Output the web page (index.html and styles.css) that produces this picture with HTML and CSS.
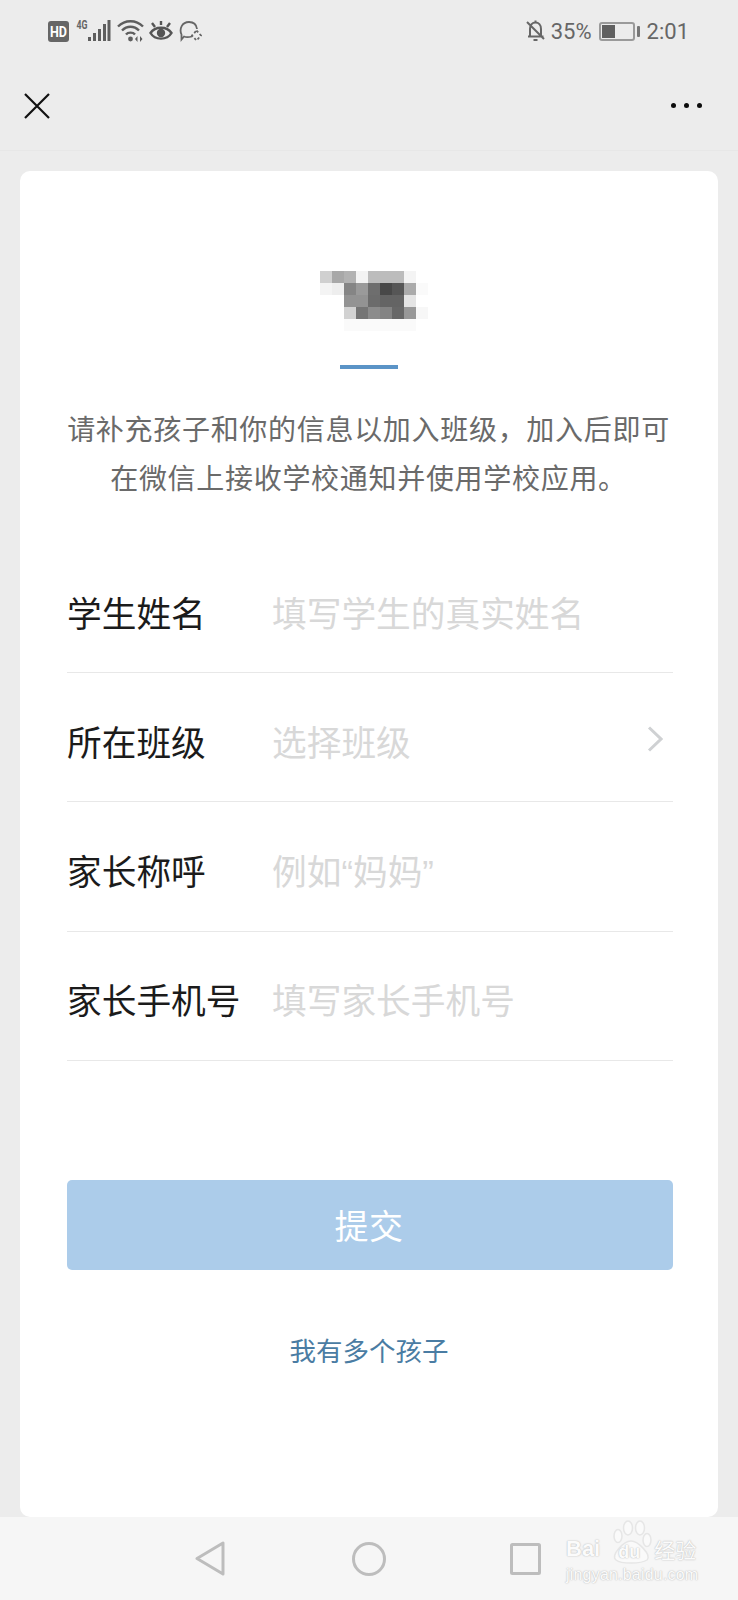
FILE: index.html
```html
<!DOCTYPE html>
<html lang="zh-CN">
<head>
<meta charset="utf-8">
<title>加入班级</title>
<link rel="stylesheet" href="styles.css">
</head>
<body>
<div class="page">
  <div class="status">
    <div class="status-left">
      <svg class="s-hd" width="21" height="21" viewBox="0 0 21 21"><rect width="21" height="21" rx="3" fill="#666"/><text x="10.5" y="15.500" text-anchor="middle" textLength="17" lengthAdjust="spacingAndGlyphs" class="hd-text">HD</text></svg>
      <svg class="s-sig" width="36" height="24" viewBox="0 0 36 24"><text x="1.500" y="10" textLength="11" lengthAdjust="spacingAndGlyphs" class="sig-text">4G</text><rect x="13" y="18" width="3" height="4" fill="#5e5e5e"/><rect x="18" y="14" width="3" height="8" fill="#5e5e5e"/><rect x="23" y="10" width="3" height="12" fill="#5e5e5e"/><rect x="28" y="5" width="3" height="17" fill="#5e5e5e"/><rect x="32.500" y="1" width="3" height="21" fill="#5e5e5e"/></svg>
      <svg class="s-wifi" width="27" height="24" viewBox="0 0 27 24" fill="none" stroke="#5e5e5e" stroke-width="2.400"><path d="M1 7.500C8 0.500 19 0.500 26 7.500"/><path d="M5 11.500C10 6.500 17 6.500 22 11.500"/><path d="M9 15.500C11 13 16 13 18 15.500"/><circle cx="13.500" cy="20" r="2.400" fill="#5e5e5e" stroke="none"/><path d="M20.500 17l-2.500 3 2.500 3zM23 17l2.500 3-2.500 3z" fill="#5e5e5e" stroke="none"/></svg>
      <svg class="s-eye" width="24" height="22" viewBox="0 0 24 22" fill="none" stroke="#555" stroke-width="2.400"><path d="M1.500 13C6 6 18 6 22.500 13C18 20.500 6 20.500 1.500 13Z"/><circle cx="12" cy="13" r="4.200" fill="#555" stroke="none"/><path d="M12 1v4M3 3l3 4M21 3l-3 4"/></svg>
      <svg class="s-chat" width="23" height="22" viewBox="0 0 23 22" fill="none" stroke="#666" stroke-width="1.800"><path d="M13 16.500C9 17.500 6 17 5 16.500L2.500 19.500V14.500C0 9 3 2 10 2C15 2 17.500 5 18 9"/><path d="M17.500 10.500L22 15.500L17.500 20.500L13 15.500Z" stroke-dasharray="2.500 2.200"/></svg>
    </div>
    <div class="status-right">
      <svg width="21" height="22" viewBox="0 0 21 22" fill="none" stroke="#666" stroke-width="2"><path d="M3 16.500h15.500M5 16V9c0-4 2.500-6.500 5.500-6.500S16 5 16 9v7M10.500 2V0.500M8.500 20h4M2 2l17 17"/></svg>
      <span class="pct">35%</span>
      <span class="battery"><span class="battery-fill"></span></span>
      <span class="battery-tip"></span>
      <span class="time">2:01</span>
    </div>
  </div>

  <div class="topbar">
    <svg width="28" height="28" viewBox="0 0 28 28" stroke="#111" stroke-width="2.200" fill="none"><path d="M2 2L26 26M26 2L2 26"/></svg>
    <div class="dots"><i></i><i></i><i></i></div>
  </div>

  <main class="card">
    <svg class="avatar" width="108" height="72" viewBox="0 0 108 72">
      <rect x="0" y="0" width="12" height="12" fill="#d0d0d0"/><rect x="12" y="0" width="12" height="12" fill="#a8a8a8"/><rect x="24" y="0" width="12" height="12" fill="#b2b2b2"/><rect x="36" y="0" width="12" height="12" fill="#f3f3f3"/><rect x="48" y="0" width="36" height="12" fill="#bcbcbc"/><rect x="84" y="0" width="12" height="12" fill="#f4f4f4"/>
      <rect x="0" y="12" width="12" height="12" fill="#f4f4f4"/><rect x="12" y="12" width="12" height="12" fill="#eeeeee"/><rect x="24" y="12" width="12" height="12" fill="#858585"/><rect x="36" y="12" width="12" height="12" fill="#9a9a9a"/><rect x="48" y="12" width="12" height="12" fill="#6e6e6e"/><rect x="60" y="12" width="12" height="12" fill="#484848"/><rect x="72" y="12" width="12" height="12" fill="#565656"/><rect x="84" y="12" width="12" height="12" fill="#ababab"/><rect x="96" y="12" width="12" height="12" fill="#fafafa"/>
      <rect x="24" y="24" width="24" height="12" fill="#939393"/><rect x="48" y="24" width="12" height="12" fill="#6c6c6c"/><rect x="60" y="24" width="24" height="12" fill="#646464"/><rect x="84" y="24" width="12" height="12" fill="#e4e4e4"/>
      <rect x="24" y="36" width="12" height="12" fill="#d2d2d2"/><rect x="36" y="36" width="12" height="12" fill="#757575"/><rect x="48" y="36" width="12" height="12" fill="#8c8c8c"/><rect x="60" y="36" width="12" height="12" fill="#838383"/><rect x="72" y="36" width="12" height="12" fill="#676767"/><rect x="84" y="36" width="12" height="12" fill="#989898"/><rect x="96" y="36" width="12" height="12" fill="#f7f7f7"/>
      <rect x="24" y="48" width="72" height="12" fill="#fafafa"/>
    </svg>
    <div class="rule"></div>
    <p class="intro">请补充孩子和你的信息以加入班级，加入后即可<br>在微信上接收学校通知并使用学校应用。</p>

    <form class="form">
      <div class="row"><span class="label">学生姓名</span><span class="ph">填写学生的真实姓名</span></div>
      <div class="row"><span class="label">所在班级</span><span class="ph">选择班级</span>
        <svg class="chev" width="16" height="26" viewBox="0 0 16 26" fill="none" stroke="#cfd1d3" stroke-width="3"><path d="M2 1.500L14 13L2 24.500"/></svg>
      </div>
      <div class="row"><span class="label">家长称呼</span><span class="ph">例如<span class="q">“</span>妈妈<span class="q">”</span></span></div>
      <div class="row"><span class="label">家长手机号</span><span class="ph">填写家长手机号</span></div>
    </form>

    <div class="submit">提交</div>
    <div class="more">我有多个孩子</div>
  </main>

  <nav class="nav">
    <svg class="nav-back" width="31" height="36" viewBox="0 0 31 36" fill="none" stroke="#bdbdbd" stroke-width="3" stroke-linejoin="round"><path d="M28 2V33L2 17.500Z"/></svg>
    <svg class="nav-home" width="34" height="34" viewBox="0 0 34 34" fill="none" stroke="#bdbdbd" stroke-width="3"><circle cx="17" cy="17" r="15.500"/></svg>
    <svg class="nav-recent" width="31" height="32" viewBox="0 0 31 32" fill="none" stroke="#bdbdbd" stroke-width="3" stroke-linejoin="round"><rect x="1.500" y="1.500" width="28" height="29" rx="1"/></svg>
    <div class="mark">
      <svg class="paw" width="44" height="46" viewBox="0 0 44 46" fill="#fafafa" stroke="#e6e6e6" stroke-width="1.500"><ellipse cx="9" cy="17" rx="4" ry="6.500"/><ellipse cx="19" cy="9" rx="4.500" ry="7"/><ellipse cx="31" cy="9" rx="4.500" ry="7"/><ellipse cx="38" cy="21" rx="4" ry="6.500"/><path d="M22 22C29 22 43 36 38 41C32 45 12 45 7 41C1 36 15 22 22 22Z"/></svg>
      <div class="mark-top"><span class="mark-bai">Bai</span><span class="mark-du">du</span><span class="mark-cn">经验</span></div>
      <div class="mark-url">jingyan.baidu.com</div>
    </div>
  </nav>
</div>
</body>
</html>
```
FILE: styles.css
```css
* { box-sizing: border-box; }
html, body { margin: 0; padding: 0; }
body { font-family: "Noto Sans CJK SC", "Noto Sans", sans-serif; background: #ececec; }
.page { width: 738px; height: 1600px; display: flex; flex-direction: column; overflow: hidden; background: #ececec; }

.status { height: 62px; flex: none; display: flex; justify-content: space-between; align-items: center; padding: 0 49px 0 48px; }
.status-left, .status-right { display: flex; align-items: center; }
.s-hd { margin-right: 6px; }
.s-sig { margin-right: 6px; }
.s-wifi { margin-right: 5px; }
.s-eye { margin-right: 6px; }
.hd-text { font: 700 14px "Roboto", sans-serif; fill: #fff; }
.sig-text { font: 700 12px "Roboto", sans-serif; fill: #666; }
.status-right { color: #666; font: 400 22px "Roboto", sans-serif; }
.pct { margin-left: 5px; margin-right: 7px; }
.battery { width: 36px; height: 19px; border: 2px solid #9a9a9a; border-radius: 3px; padding: 1px; display: block; }
.battery-fill { display: block; width: 13px; height: 100%; background: #606060; }
.battery-tip { width: 3px; height: 11px; margin-left: 2px; background: #777; border-radius: 1px; }
.time { margin-left: 7px; }

.topbar { height: 89px; flex: none; display: flex; justify-content: space-between; align-items: center; padding: 0 36px 1px 23px; border-bottom: 1px solid #e7e7e7; }
.dots { display: flex; gap: 8px; }
.dots i { width: 5px; height: 5px; border-radius: 50%; background: #0c0c0c; display: block; }

.card { margin: 20px 20px 0; width: 698px; height: 1346px; flex: none; background: #fff; border-radius: 10px; padding: 100px 45px 0 47px; display: flex; flex-direction: column; align-items: center; }
.avatar { flex: none; margin-left: 8px; }
.rule { width: 58px; height: 4px; margin: 22px 2px 0 0; background: #5b94c7; }
.intro { margin: 35px -2px 0 -5px; text-align: center; font-size: 28px; line-height: 49px; letter-spacing: 0.7px; color: #6a6a6a; white-space: nowrap; }
.form { width: 100%; margin-top: 42px; }
.row { height: 129.200px; border-bottom: 1px solid #e8e8e8; display: flex; align-items: center; font-size: 34.700px; padding-top: 7px; }
.label { width: 205px; flex: none; color: #1b1b1b; white-space: nowrap; }
.ph { color: #d8d8d8; flex: 1; white-space: nowrap; }
.q { font-family: "Liberation Sans", sans-serif; }
.chev { flex: none; margin-right: 10px; margin-bottom: 4px; }
.submit { width: 100%; height: 90px; margin-top: 119px; padding-right: 2px; background: #acccea; border-radius: 5px; color: #fff; font-size: 34px; display: flex; align-items: center; justify-content: center; letter-spacing: 0.5px; }
.more { margin: 60px 2px 0 0; font-size: 26.500px; line-height: 40px; color: #4a7ca3; }

.nav { flex: 1; background: #f6f6f6; display: flex; align-items: center; padding: 0 0 1px 195px; position: relative; }
.nav-back { margin-right: 127px; margin-top: 2px; }
.nav-home { margin-right: 124px; margin-left: -1px; margin-top: 2px; }
.nav-recent { margin-top: 2px; }
.mark { position: absolute; left: 566px; top: 0; width: 140px; }
.paw { position: absolute; left: 43px; top: 2px; }
.mark-top { position: relative; display: flex; align-items: center; margin-top: 22px; height: 20px; font: 700 22px/20px "Liberation Sans", sans-serif; color: #fbfbfb; text-shadow: 0 0 1px #bbb, 0 0 2px #ccc; }
.mark-du { font-size: 18px; margin: 6px 14px 0 18px; }
.mark-cn { font: 400 21px/20px "Noto Sans CJK SC", sans-serif; }
.mark-url { font: 400 16px/18px "Liberation Sans", sans-serif; margin-top: 7px; color: #fbfbfb; text-shadow: 0 0 1px #bbb, 0 0 2px #ccc; letter-spacing: 0.2px; white-space: nowrap; }
```
